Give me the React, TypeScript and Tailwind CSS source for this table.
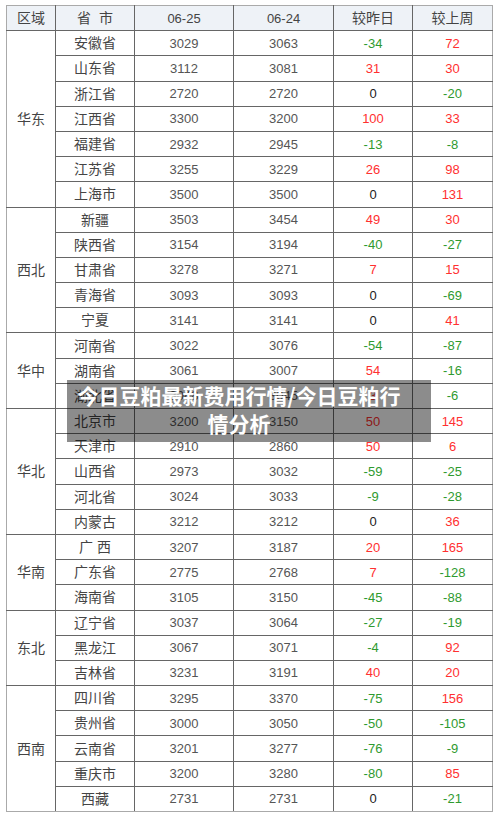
import React from "react";

type Row = [string, string, string, string, string];
type Group = { region: string; rows: Row[] };

const groups: Group[] = [
  {
    region: "华东",
    rows: [
      ["安徽省", "3029", "3063", "-34", "72"],
      ["山东省", "3112", "3081", "31", "30"],
      ["浙江省", "2720", "2720", "0", "-20"],
      ["江西省", "3300", "3200", "100", "33"],
      ["福建省", "2932", "2945", "-13", "-8"],
      ["江苏省", "3255", "3229", "26", "98"],
      ["上海市", "3500", "3500", "0", "131"],
    ],
  },
  {
    region: "西北",
    rows: [
      ["新疆", "3503", "3454", "49", "30"],
      ["陕西省", "3154", "3194", "-40", "-27"],
      ["甘肃省", "3278", "3271", "7", "15"],
      ["青海省", "3093", "3093", "0", "-69"],
      ["宁夏", "3141", "3141", "0", "41"],
    ],
  },
  {
    region: "华中",
    rows: [
      ["河南省", "3022", "3076", "-54", "-87"],
      ["湖南省", "3061", "3007", "54", "-16"],
      ["湖北省", "3048", "3045", "3", "-6"],
    ],
  },
  {
    region: "华北",
    rows: [
      ["北京市", "3200", "3150", "50", "145"],
      ["天津市", "2910", "2860", "50", "6"],
      ["山西省", "2973", "3032", "-59", "-25"],
      ["河北省", "3024", "3033", "-9", "-28"],
      ["内蒙古", "3212", "3212", "0", "36"],
    ],
  },
  {
    region: "华南",
    rows: [
      ["广 西", "3207", "3187", "20", "165"],
      ["广东省", "2775", "2768", "7", "-128"],
      ["海南省", "3105", "3150", "-45", "-88"],
    ],
  },
  {
    region: "东北",
    rows: [
      ["辽宁省", "3037", "3064", "-27", "-19"],
      ["黑龙江", "3067", "3071", "-4", "92"],
      ["吉林省", "3231", "3191", "40", "20"],
    ],
  },
  {
    region: "西南",
    rows: [
      ["四川省", "3295", "3370", "-75", "156"],
      ["贵州省", "3000", "3050", "-50", "-105"],
      ["云南省", "3201", "3277", "-76", "-9"],
      ["重庆市", "3200", "3280", "-80", "85"],
      ["西藏", "2731", "2731", "0", "-21"],
    ],
  },
];

function colorFor(v: string) {
  if (v === "0") return "text-[#222]";
  if (v.startsWith("-")) return "text-[#2f9a2f]";
  return "text-[#ff3030]";
}

const cell =
  "border border-[#666] h-[25.2px] p-0 text-center align-middle text-[13px] leading-none";

export default function App() {
  const totalGroups = groups.length;
  return (
    <div
      className="relative w-[500px] h-[821px] bg-white pt-[5px] pl-[6px]"
      style={{ fontFamily: '"Liberation Sans", "Noto Sans CJK SC", sans-serif' }}
    >
      <table className="border-collapse w-[486px] table-fixed text-[#555]">
        <colgroup>
          <col className="w-[49px]" />
          <col className="w-[79px]" />
          <col className="w-[99px]" />
          <col className="w-[100px]" />
          <col className="w-[79px]" />
          <col className="w-[80px]" />
        </colgroup>
        <thead>
          <tr className="bg-[#eef2f7]">
            <th className={`${cell} font-normal text-[#444] border-t-[#aaa] border-l-[#aaa] text-[14px]`}>区域</th>
            <th className={`${cell} font-normal text-[#444] border-t-[#aaa] text-[14px]`}>省&nbsp;&nbsp;市</th>
            <th className={`${cell} font-normal text-[#444] border-t-[#aaa]`}>06-25</th>
            <th className={`${cell} font-normal text-[#444] border-t-[#aaa]`}>06-24</th>
            <th className={`${cell} font-normal text-[#444] border-t-[#aaa] text-[14px]`}>较昨日</th>
            <th className={`${cell} font-normal text-[#444] border-t-[#aaa] border-r-[#aaa] text-[14px]`}>较上周</th>
          </tr>
        </thead>
        <tbody>
          {groups.map((g, gi) =>
            g.rows.map((r, ri) => {
              const lastRow = gi === totalGroups - 1 && ri === g.rows.length - 1;
              const b = lastRow ? " border-b-[#aaa]" : "";
              return (
                <tr key={g.region + ri}>
                  {ri === 0 && (
                    <td
                      rowSpan={g.rows.length}
                      className={`${cell} border-l-[#aaa] text-[14px] text-[#444]${gi === totalGroups - 1 ? " border-b-[#aaa]" : ""}`}
                    >
                      {g.region}
                    </td>
                  )}
                  <td className={`${cell} text-[14px] text-[#444]${b}`}>{r[0]}</td>
                  <td className={`${cell}${b}`}>{r[1]}</td>
                  <td className={`${cell}${b}`}>{r[2]}</td>
                  <td className={`${cell} ${colorFor(r[3])}${b}`}>{r[3]}</td>
                  <td className={`${cell} ${colorFor(r[4])} border-r-[#aaa]${b}`}>{r[4]}</td>
                </tr>
              );
            })
          )}
        </tbody>
      </table>

      <div
        className="absolute left-[67px] top-[380px] w-[364px] h-[62px] bg-[rgba(0,0,0,0.45)] pt-[1px] pl-[6px] pr-[26px] text-center text-white font-bold text-[21px] leading-[28px]"
        style={{ fontFamily: '"Noto Sans CJK SC", "Noto Sans", sans-serif' }}
      >
        今日豆粕最新费用行情/今日豆粕行情分析
      </div>
    </div>
  );
}
